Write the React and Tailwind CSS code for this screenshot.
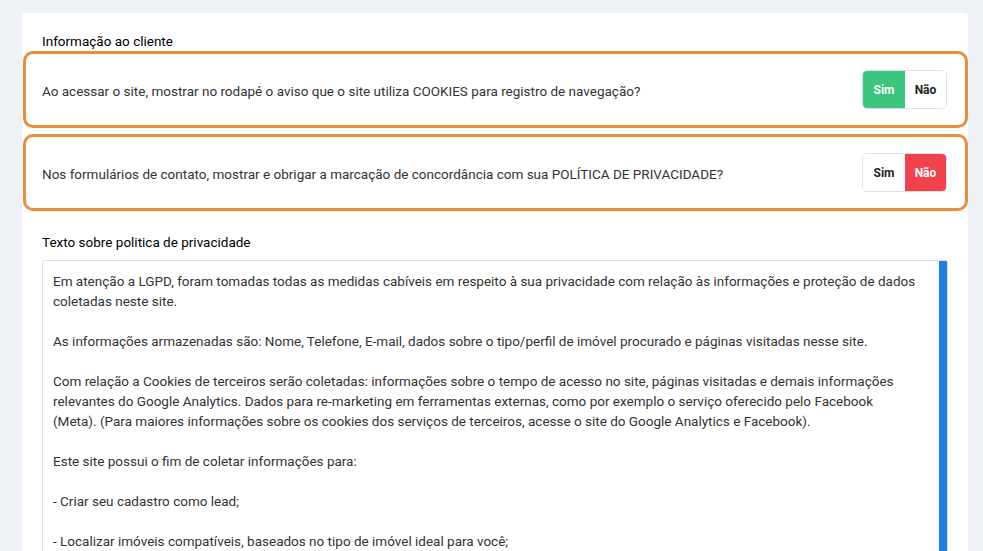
import { useState } from "react"

// Grupo de botões Sim / Não
function SimNao({ valor, onChange }) {
  return (
    <div className="flex h-[39px] overflow-hidden rounded-[5px] border border-[#dfe3e8] text-[12px] font-bold">
      <button
        onClick={() => onChange(true)}
        className={
          valor
            ? "w-[42px] bg-[#3cc57d] text-white"
            : "w-[42px] bg-white text-[#222]"
        }
      >
        Sim
      </button>
      <button
        onClick={() => onChange(false)}
        className={
          !valor
            ? "w-[41px] bg-[#f2424d] text-white"
            : "w-[41px] bg-white text-[#222]"
        }
      >
        Não
      </button>
    </div>
  )
}

function Opcao({ texto, valor, onChange }) {
  return (
    <div className="flex h-[77px] items-center justify-between rounded-[10px] border-[3px] border-[#e98d3e] pl-4 pr-[18px]">
      <p className="pt-1 text-[13.5px] text-[#333]">{texto}</p>
      <SimNao valor={valor} onChange={onChange} />
    </div>
  )
}

const POLITICA = [
  "Em atenção a LGPD, foram tomadas todas as medidas cabíveis em respeito à sua privacidade com relação às informações e proteção de dados",
  "coletadas neste site.",
  "",
  "As informações armazenadas são: Nome, Telefone, E-mail, dados sobre o tipo/perfil de imóvel procurado e páginas visitadas nesse site.",
  "",
  "Com relação a Cookies de terceiros serão coletadas: informações sobre o tempo de acesso no site, páginas visitadas e demais informações",
  "relevantes do Google Analytics. Dados para re-marketing em ferramentas externas, como por exemplo o serviço oferecido pelo Facebook",
  "(Meta). (Para maiores informações sobre os cookies dos serviços de terceiros, acesse o site do Google Analytics e Facebook).",
  "",
  "Este site possui o fim de coletar informações para:",
  "",
  "- Criar seu cadastro como lead;",
  "",
  "- Localizar imóveis compatíveis, baseados no tipo de imóvel ideal para você;",
]

export default function App() {
  const [cookies, setCookies] = useState(true)
  const [politica, setPolitica] = useState(false)

  return (
    <div
      className="h-[551px] overflow-hidden bg-[#eef1f6] pl-[22px] pr-[15px] pt-[13px] text-[#2b2b2b]"
      style={{ fontFamily: "Roboto, 'Noto Sans', sans-serif" }}
    >
      <div className="rounded-t-[4px] bg-white">
        <h2 className="pl-5 pt-[21px] pb-[2px] text-[13.5px] leading-[15px] text-[#000]">
          Informação ao cliente
        </h2>

        <div className="flex flex-col gap-[6px] pl-px">
          <Opcao
            texto="Ao acessar o site, mostrar no rodapé o aviso que o site utiliza COOKIES para registro de navegação?"
            valor={cookies}
            onChange={setCookies}
          />
          <Opcao
            texto="Nos formulários de contato, mostrar e obrigar a marcação de concordância com sua POLÍTICA DE PRIVACIDADE?"
            valor={politica}
            onChange={setPolitica}
          />
        </div>

        <div className="border-t border-[#eceff3] px-5 pt-[23px]">
          <h2 className="mb-[10px] text-[13.5px] leading-[15px] text-[#000]">
            Texto sobre politica de privacidade
          </h2>
          <div className="flex h-[300px] rounded-t-[3px] border border-b-0 border-[#dde2e8]">
            <div className="flex-1 overflow-hidden pl-[10px] pt-[10px] text-[13.5px] leading-[20px] text-[#333]">
              {POLITICA.map((linha, i) => (
                <div key={i} className="h-5 whitespace-nowrap">
                  {linha}
                </div>
              ))}
            </div>
            <div className="w-[8px] bg-[#1a7fe6]" />
          </div>
        </div>
      </div>
    </div>
  )
}
